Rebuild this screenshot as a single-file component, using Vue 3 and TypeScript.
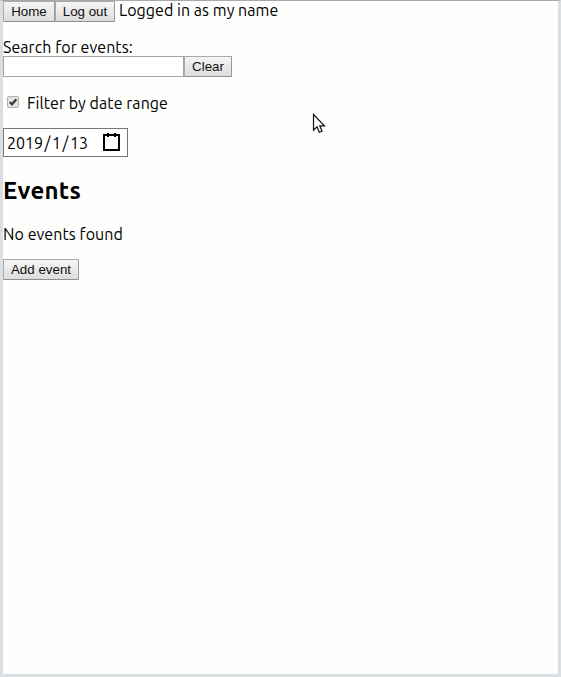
<script setup lang="ts">
import { ref } from 'vue'

const query = ref('')
const filterByDate = ref(true)
const userName = 'my name'
const dateParts = ['2019', '1', '13']
</script>

<template>
  <main class="window">
    <header class="session">
      <button class="btn home">Home</button>
      <button class="btn logout">Log out</button>
      <span class="user">Logged in as {{ userName }}</span>
    </header>
    <label class="search-label" for="search">Search for events:</label>
    <div class="search">
      <input id="search" v-model="query" type="text" class="field" />
      <button class="btn clear" @click="query = ''">Clear</button>
    </div>
    <label class="filter">
      <input v-model="filterByDate" type="checkbox" class="native" />
      <span class="box">
        <svg v-if="filterByDate" viewBox="0 0 12 12" width="12" height="12">
          <path d="M2.8 6.2 5 8.3 9.3 3.2" fill="none" stroke="#3d3d3d" stroke-width="2.3" />
        </svg>
      </span>
      <span class="filter-text">Filter by date range</span>
    </label>
    <div class="date">
      <span class="date-text"><template v-for="(part, i) in dateParts" :key="i"><span v-if="i" class="slash">/</span>{{ part }}</template></span>
      <svg class="calendar" viewBox="0 0 17 18" width="17" height="18">
        <path d="M1 2H16V17H1Z" fill="none" stroke="#000" stroke-width="2" />
        <path d="M4 0H6V4H4ZM11 0H13V4H11Z" fill="#000" />
      </svg>
    </div>
    <h2 class="title">Events</h2>
    <p class="empty">No events found</p>
    <button class="btn add">Add event</button>
    <svg class="pointer" viewBox="0 0 14 21" width="14" height="21">
      <path d="M1.5 1.5V17L5 13.7 7.3 19.3 10 18.2 7.8 12.8H12.5Z" fill="#fff" stroke="#111" stroke-width="1.2" />
    </svg>
  </main>
</template>

<style>
body {
  background: #fefffd;
}
</style>

<style scoped>
.window {
  position: relative;
  box-sizing: border-box;
  height: 677px;
  border: 3px solid #dae0e2;
  border-top: 1px solid #a9a9a9;
  background: #fefefd;
  color: #000;
  font: 16px/18px Ubuntu, "Noto Sans", sans-serif;
  display: flex;
  flex-direction: column;
  align-items: flex-start;
  overflow: hidden;
  white-space: nowrap;
}
.btn {
  box-sizing: border-box;
  height: 21px;
  margin: 0;
  padding: 0;
  border: 1px solid #a5a5a5;
  border-color: #aaa #999 #8f8f8f #aaa;
  border-radius: 1px;
  background: linear-gradient(#f5f5f5, #dddddd);
  color: #111;
  font: 13.333px/17px "Liberation Sans", Arial, sans-serif;
}
.session {
  display: flex;
  height: 21px;
}
.home { width: 52px; }
.logout { width: 60px; }
.user {
  margin-left: 4px;
  letter-spacing: 0.04px;
}
.search-label {
  margin-top: 16px;
  height: 18px;
  letter-spacing: 0.06px;
}
.search {
  display: flex;
}
.field {
  box-sizing: border-box;
  width: 181px;
  height: 21px;
  margin: 0;
  padding: 1px 2px;
  border: 1px solid #a5a5a5;
  border-radius: 0;
  background: #fff;
  outline: none;
  font: 13.333px "Liberation Sans", sans-serif;
}
.clear { width: 48px; }
.add { width: 76px; }
.filter {
  display: flex;
  align-items: center;
  height: 18px;
  margin-top: 17px;
}
.native {
  appearance: none;
  width: 0;
  height: 0;
  margin: 0;
}
.box {
  display: flex;
  box-sizing: border-box;
  width: 12px;
  height: 12px;
  margin: 0 8px 2px 4px;
  border: 1px solid #b0b0b0;
  border-radius: 2px;
  background: #e4e4e4;
}
.box svg {
  flex: none;
  margin: -1px;
}
.filter-text { letter-spacing: 0.06px; }
.date {
  box-sizing: border-box;
  display: flex;
  align-items: center;
  justify-content: space-between;
  width: 125px;
  height: 29px;
  margin-top: 16px;
  padding: 0 7px 0 3px;
  border: 1px solid #767676;
  background: #fff;
}
.slash { margin: 0 1.5px; }
.calendar { margin-bottom: 1px; }
.title {
  margin: 20px 0 0;
  font-size: 24px;
  line-height: 28px;
  font-weight: 700;
  letter-spacing: 0.3px;
}
.empty {
  margin: 20px 0 16px;
  letter-spacing: 0.06px;
}
.pointer {
  position: absolute;
  left: 309px;
  top: 112px;
}
</style>
